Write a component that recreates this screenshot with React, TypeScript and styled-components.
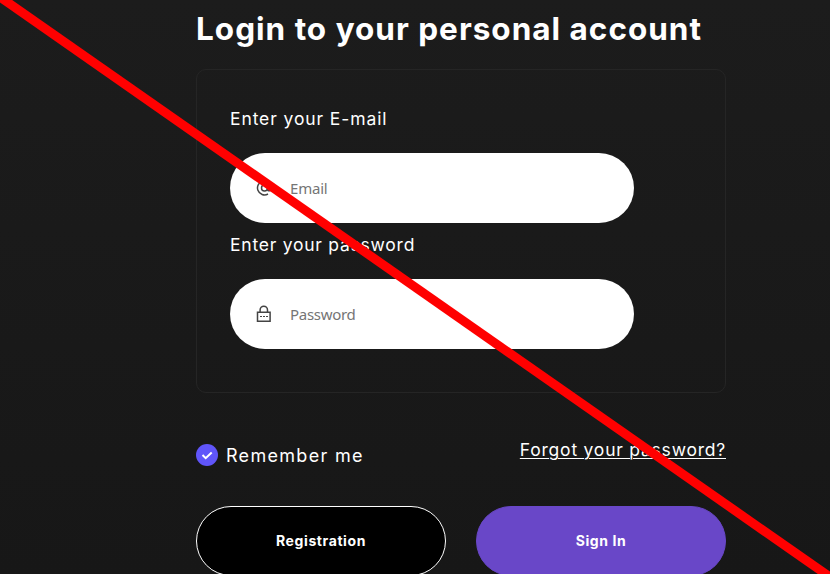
import React from 'react';
import styled, { createGlobalStyle } from 'styled-components';

const GlobalStyle = createGlobalStyle`
  * { box-sizing: border-box; }
  html, body { margin: 0; overflow: hidden; background: #181818; }
`;

const Page = styled.main`
  position: relative;
  width: 830px;
  height: 574px;
  overflow: hidden;
  padding: 9px 104px 0 196px;
  background: linear-gradient(180deg, #1c1c1c 0%, #171717 100%);
  color: #fff;
  font-family: Inter, "Liberation Sans", sans-serif;
`;

const Title = styled.h1`
  margin: 0;
  height: 60px;
  font-size: 31.5px;
  line-height: 40px;
  font-weight: 700;
  letter-spacing: 1px;
  white-space: nowrap;
`;

const Card = styled.section`
  height: 324px;
  padding: 35px 33px 0;
  border: 1px solid #252525;
  border-radius: 10px;
`;

const Field = styled.label`
  display: block;
  margin-bottom: 8px;
`;

const Label = styled.span<{ $spacing: number }>`
  display: block;
  height: 48px;
  font-size: 17.5px;
  line-height: 28px;
  letter-spacing: ${({ $spacing }) => $spacing}px;
  white-space: nowrap;
`;

const InputShell = styled.span`
  display: flex;
  align-items: center;
  width: 404px;
  height: 70px;
  padding-left: 26px;
  border-radius: 35px;
  background: #fff;
  color: #444;

  svg { flex: none; width: 16px; height: 18px; }
`;

const Input = styled.input<{ $spacing: number }>`
  flex: 1;
  min-width: 0;
  margin: 0 24px 0 18px;
  padding: 0;
  border: 0;
  outline: 0;
  background: transparent;
  font: 15px/20px "Noto Sans", sans-serif;
  letter-spacing: ${({ $spacing }) => $spacing}px;

  &::placeholder { color: #757575; opacity: 1; }
`;

const Options = styled.div`
  display: flex;
  justify-content: space-between;
  height: 113px;
  padding-top: 43px;
`;

const Remember = styled.div`
  display: flex;
  align-items: center;
  gap: 8px;
  height: 24px;
  margin-top: 7px;
  font-size: 18px;
  letter-spacing: 1.3px;
  white-space: nowrap;
`;

const Check = styled.span`
  display: flex;
  width: 22px;
  height: 22px;
  border-radius: 50%;
  background: #6055fa;
`;

const Forgot = styled.a`
  height: 28px;
  color: #fff;
  font-size: 17.5px;
  line-height: 28px;
  letter-spacing: 0.78px;
  text-decoration: underline;
  text-decoration-thickness: 1px;
  text-underline-offset: 2px;
  white-space: nowrap;
`;

const Actions = styled.div`
  display: flex;
  gap: 30px;
`;

const Button = styled.button<{ $primary?: boolean }>`
  width: 250px;
  height: 70px;
  padding: 0;
  border: 1px solid ${({ $primary }) => ($primary ? '#6947c8' : '#fff')};
  border-radius: 35px;
  background: ${({ $primary }) => ($primary ? '#6947c8' : '#000')};
  color: #fff;
  font: 700 14px/20px Inter, sans-serif;
  letter-spacing: 0.6px;
`;

const Strike = styled.svg`
  position: absolute;
  inset: 0;
  pointer-events: none;
`;

const AtIcon = () => (
  <svg viewBox="0 0 16 18" fill="none" stroke="currentColor" strokeWidth="1.5">
    <circle cx="8.5" cy="9" r="3" />
    <path d="M11.5 6v4.2c0 2.5 4 2.2 4-1.2a7 7 0 1 0-3.5 6" />
  </svg>
);

const LockIcon = () => (
  <svg viewBox="0 0 16 18" fill="none" stroke="currentColor" strokeWidth="1.5">
    <path d="M1.5 7.2h12.6v9H1.5zM4.1 7V5a3.7 3.7 0 0 1 7.4 0v2" />
    <path d="M4 11.5h2M7 11.5h2M10 11.5h2" strokeWidth="1.2" />
  </svg>
);

export default function App() {
  return (
    <>
      <GlobalStyle />
      <Page>
        <Title>Login to your personal account</Title>
        <Card>
          <Field>
            <Label $spacing={0.9}>Enter your E-mail</Label>
            <InputShell><AtIcon /><Input $spacing={-0.2} type="email" placeholder="Email" /></InputShell>
          </Field>
          <Field>
            <Label $spacing={0.76}>Enter your password</Label>
            <InputShell><LockIcon /><Input $spacing={-0.3} type="password" placeholder="Password" /></InputShell>
          </Field>
        </Card>
        <Options>
          <Remember>
            <Check>
              <svg width="22" height="22" viewBox="0 0 22 22" fill="none" stroke="#fff" strokeWidth="2">
                <path d="m6.5 11 3.2 3.2L15.7 8.5" />
              </svg>
            </Check>
            <span>Remember me</span>
          </Remember>
          <Forgot>Forgot your password?</Forgot>
        </Options>
        <Actions>
          <Button>Registration</Button>
          <Button $primary>Sign In</Button>
        </Actions>
        <Strike width="830" height="574" viewBox="0 0 830 574">
          <path d="M-10-10 840 584" stroke="#f00" strokeWidth="9" />
        </Strike>
      </Page>
    </>
  );
}
